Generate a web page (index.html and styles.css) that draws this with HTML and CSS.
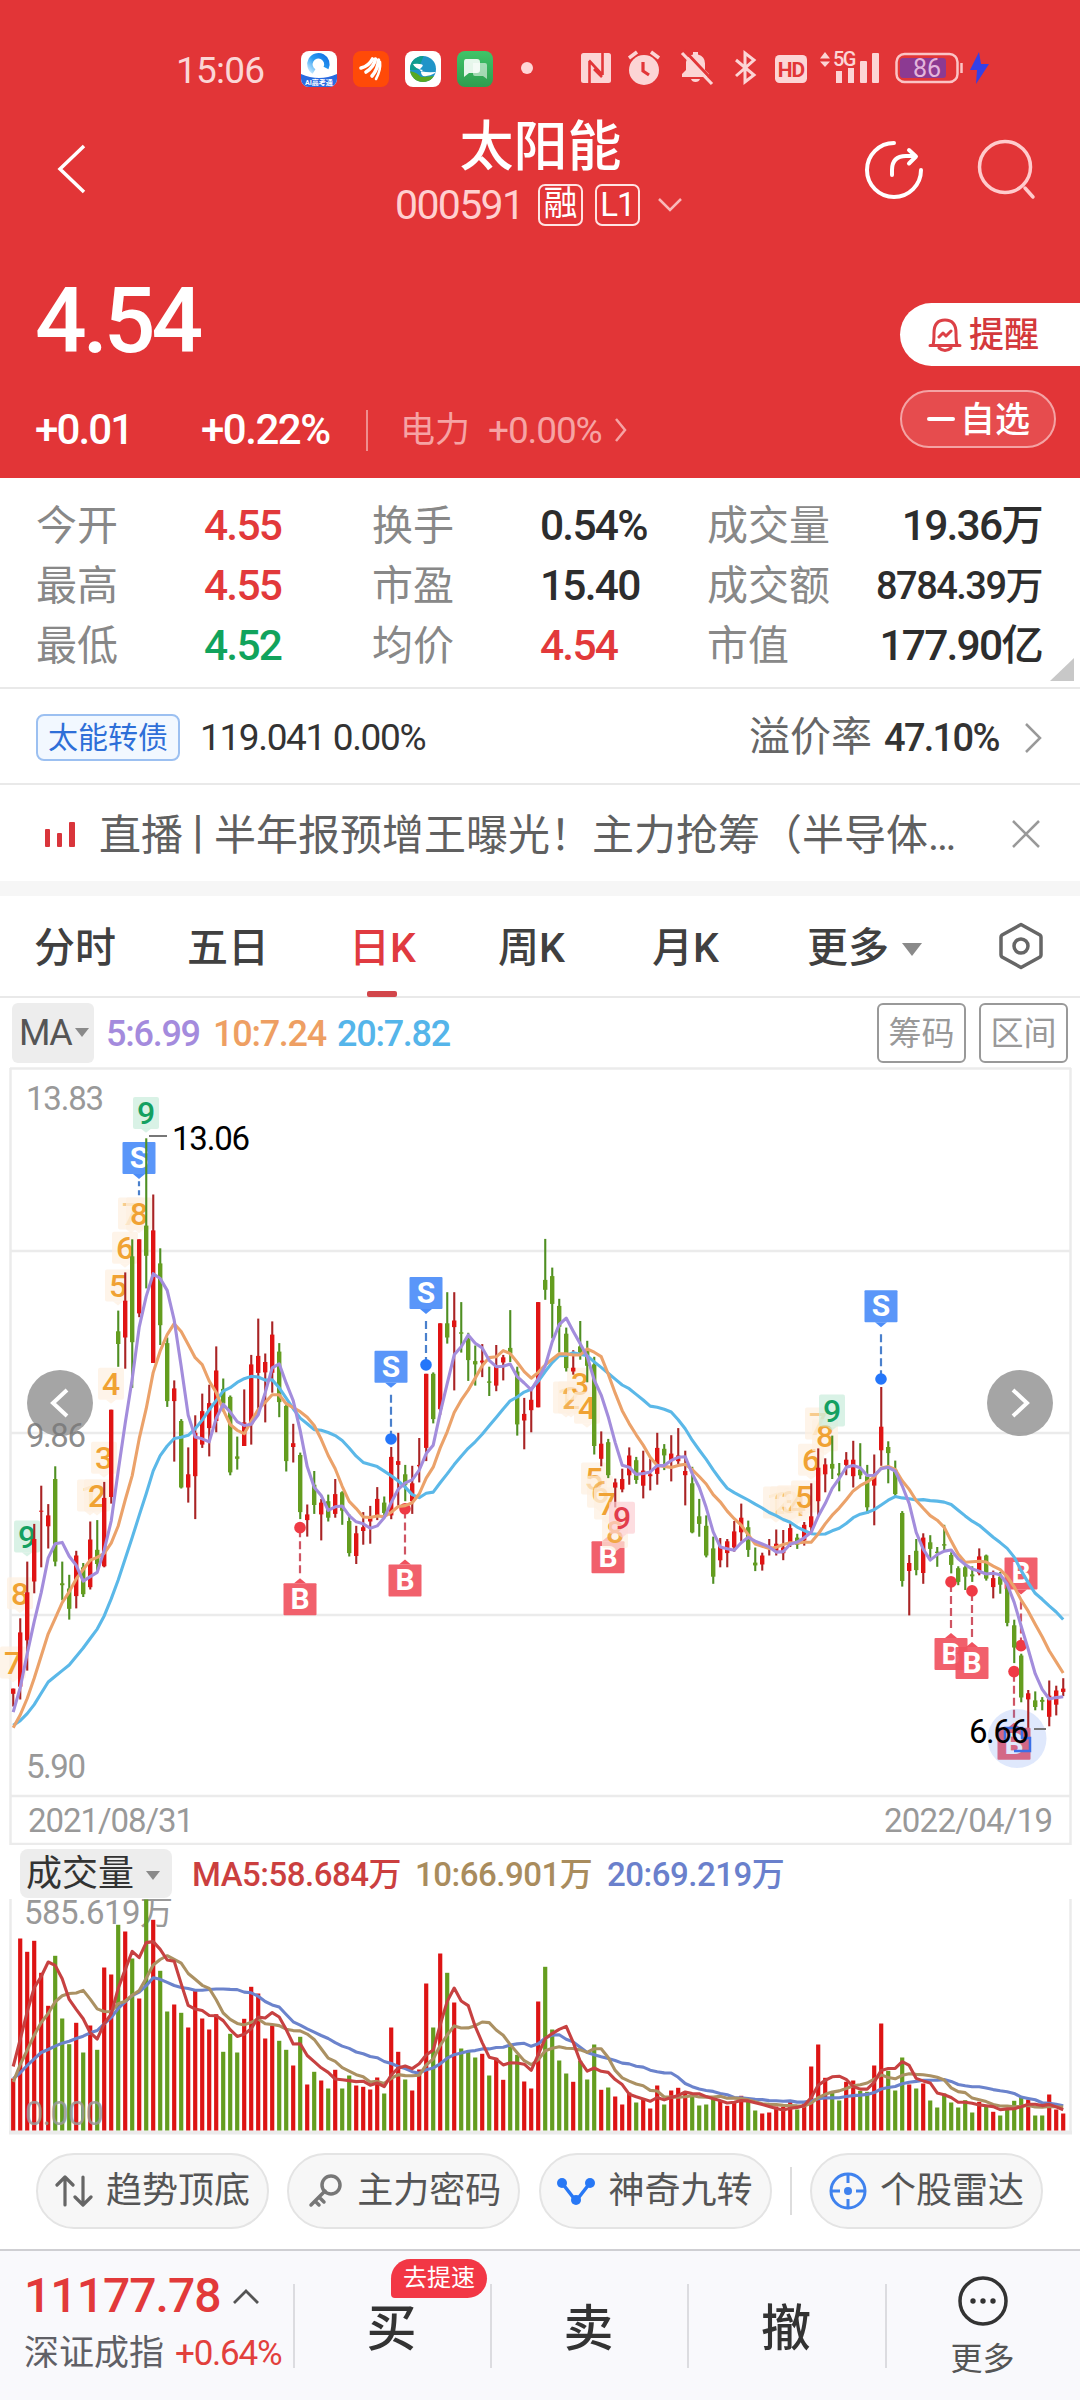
FILE: index.html
```html
<!DOCTYPE html>
<html lang="zh-CN">
<head>
<meta charset="utf-8">
<title>太阳能 000591</title>
<link rel="stylesheet" href="styles.css">
</head>
<body>
<header class="hero">
  <div class="status">
    <span class="clock">15:06</span>
    <svg class="apps" width="240" height="36" viewBox="0 0 240 36">
      <defs>
        <linearGradient id="gq" x1="0" y1="1" x2="1" y2="0"><stop offset="0" stop-color="#bfe6ff"/><stop offset=".5" stop-color="#2b9cf0"/><stop offset="1" stop-color="#1473e6"/></linearGradient>
        <linearGradient id="gm" x1="0" y1="0" x2="0" y2="1"><stop offset="0" stop-color="#3fc468"/><stop offset="1" stop-color="#2e9d4f"/></linearGradient>
        <clipPath id="ca"><rect width="36" height="36" rx="8"/></clipPath>
        <clipPath id="cg"><circle cx="122" cy="18" r="13"/></clipPath>
      </defs>
      <g clip-path="url(#ca)"><rect width="36" height="36" fill="#fff"/><path d="M0 23q18 8 36 0v13H0z" fill="#2a6be0"/></g>
      <path d="M13 20.500A8.500 8.500 0 1 1 25 17" fill="none" stroke="url(#gq)" stroke-width="5.500"/>
      <text x="18" y="33.500" class="app-text">AI高考通</text>
      <rect x="52" width="36" height="36" rx="8" fill="#ff4a08"/>
      <g fill="none" stroke="#fff" stroke-linecap="round" stroke-width="3.600"><path d="M60 17q8-2 11.500-9"/><path d="M65 21q8-5 9.500-13"/><path d="M71 25q6-7 6.500-16"/><path d="M75 28q5-9 4-17" stroke-width="2.600"/></g>
      <rect x="104" width="36" height="36" rx="8" fill="#fff"/>
      <g clip-path="url(#cg)"><path d="M109 4h27v28h-27z" fill="#2094c8"/><path d="M109 4h14l-6 15h-10z" fill="#0f9c8e"/><path d="M108 20q8 1 12 6l16-1v8h-28z" fill="#58a822"/><path d="M112 13q14-1 8 4t16 4q-8 5-14 4-4-4 0-6-8-1-10-6z" fill="#fff"/></g>
      <rect x="156" width="36" height="36" rx="8" fill="url(#gm)"/>
      <path d="M172 12h12q2 0 2 2v14l-4-3h-8q-2 0-2-2z" fill="#fff" opacity=".55"/>
      <path d="M165 8h11q3 0 3 3v8q0 3-3 3h-8l-5 4V11q0-3 2-3z" fill="#fff" opacity=".88"/>
      <circle cx="226" cy="17" r="6" fill="#ffd6d6"/>
    </svg>
    <svg class="sys" width="410" height="40" viewBox="0 0 410 40">
      <g fill="#fcd5d5">
        <rect x="0" y="4" width="30" height="30" rx="2.500"/>
        <path d="M8.500 34V12M8 11.500l13 14M21.500 4v22M13 20l8 8" fill="none" stroke="#e23537" stroke-width="2.600"/>
        <circle cx="63" cy="21" r="15"/>
        <path d="M48 9l8-6M70 3l8 6" stroke="#fcd5d5" stroke-width="3.500"/>
        <path d="M62 13v9l6 4" fill="none" stroke="#e23537" stroke-width="3.200"/>
        <path d="M101 28v-3l4-4v-8q1-6 7-7.500V3h5v2.500q7 2 7 9V21l4 4v3zM110 30h9q-1 3-4.500 3t-4.500-3z"/>
        <path d="M103 1l31 33" stroke="#e23537" stroke-width="3"/><path d="M101 4l30 31" stroke="#fcd5d5" stroke-width="3.200"/>
        <path d="M155 11l18 15-9 7V4l9 7-18 16" fill="none" stroke="#fcd5d5" stroke-width="3"/>
        <rect x="194" y="6" width="32" height="28" rx="4.500"/>
        <path d="M239 9.500l5-6.500 5 6.500zM239 12.500l5 5.500 5-5.500z"/>
        <rect x="255" y="22" width="6" height="12"/><rect x="267" y="19" width="6" height="15"/><rect x="279" y="12" width="7" height="22" rx="1"/><rect x="291" y="4" width="7" height="30" rx="1"/>
      </g>
      <text x="210" y="28" class="hd">HD</text>
      <text x="252" y="17" class="g5">5G</text>
      <rect x="315.500" y="5" width="61" height="28" rx="8" fill="none" stroke="#fbc4c5" stroke-width="2.500"/>
      <rect x="319" y="9" width="46" height="20" rx="3" fill="#8c3a92"/>
      <path d="M380.500 14v10" stroke="#fbc4c5" stroke-width="2.500"/>
      <text x="346" y="28" class="bat">86</text>
      <path d="M398 3l-9 18h7l-1 14 13-20h-8z" fill="#3340e8"/>
    </svg>
  </div>
  <div class="nav">
    <svg class="back" width="30" height="50" viewBox="0 0 30 50"><path d="M27 2L3 25l24 23" fill="none" stroke="#fff" stroke-width="3.500"/></svg>
    <div class="name">
      <h1>太阳能</h1>
      <div class="code"><span class="num">000591</span><b>融</b><b>L1</b><svg width="24" height="14" viewBox="0 0 24 14"><path d="M1 1l11 11L23 1" fill="none" stroke="#f9b9ba" stroke-width="2.500"/></svg></div>
    </div>
    <svg class="tools" width="180" height="64" viewBox="0 0 180 64">
      <g fill="none" stroke-linecap="round" stroke-linejoin="round"><path d="M31 5A27 27 0 1 0 58 32" stroke="#fff" stroke-width="4"/><path d="M29 37v-5q0-14 14-14h9M46 12l7 6.500-7 7" stroke="#fff" stroke-width="4"/><circle cx="142" cy="29" r="25.500" stroke="#ffcbcc" stroke-width="3.500"/><path d="M162 50l8 9" stroke="#ffcbcc" stroke-width="3.500"/></g>
    </svg>
  </div>
  <div class="quote">
    <div class="price">
      <div class="last num">4.54</div>
      <div class="change"><span class="num diff">+0.01</span><span class="num pct">+0.22%</span><i></i><span class="sector">电力</span><span class="num sector-pct">+0.00%</span><svg width="12" height="24" viewBox="0 0 12 24"><path d="M1 1l9 11-9 11" fill="none" stroke="#f6a3a4" stroke-width="2.500"/></svg></div>
    </div>
    <div class="actions">
      <div class="remind"><svg width="34" height="36" viewBox="0 0 34 36"><g fill="none" stroke="#dc4046" stroke-width="3" stroke-linejoin="round" stroke-linecap="round"><path d="M2 28.500h30M5 28q1-3 1-12Q6 3 17 3t11 13q0 9 1 12M11 31q6 5 12 0M11 20l4-4 3 3 5-5"/></g></svg><span>提醒</span></div>
      <div class="watch"><i></i><span>自选</span></div>
    </div>
  </div>
</header>
<main>
  <section class="stats">
    <span>今开</span><b class="up">4.55</b><span>换手</span><b>0.54%</b><span>成交量</span><b class="end">19.36万</b>
    <span>最高</span><b class="up">4.55</b><span>市盈</span><b>15.40</b><span>成交额</span><b class="end small">8784.39万</b>
    <span>最低</span><b class="down">4.52</b><span>均价</span><b class="up">4.54</b><span>市值</span><b class="end">177.90亿</b>
    <i class="corner"></i>
  </section>
  <section class="bond">
    <span class="chip">太能转债</span><span class="num bond-price">119.041 0.00%</span><span class="premium">溢价率</span><span class="num rate">47.10%</span>
    <svg width="18" height="32" viewBox="0 0 18 32"><path d="M2 2l14 14L2 30" fill="none" stroke="#999" stroke-width="2.500"/></svg>
  </section>
  <section class="live">
    <svg width="32" height="28" viewBox="0 0 32 28"><g fill="#d9353b"><rect x="1" y="9" width="5" height="18" rx="1"/><rect x="13" y="13" width="5" height="14" rx="1"/><rect x="25" y="2" width="6" height="25" rx="1"/></g></svg>
    <span>直播<i>丨</i>半年报预增王曝光！主力抢筹（半导体…</span>
    <svg width="28" height="28" viewBox="0 0 28 28"><path d="M1 1l26 26M27 1L1 27" stroke="#999" stroke-width="2.500"/></svg>
  </section>
  <nav class="tabs">
    <span>分时</span><span>五日</span><span class="on">日K</span><span>周K</span><span>月K</span><span class="more">更多<i class="tri"></i></span>
    <svg width="44" height="48" viewBox="0 0 44 48"><g fill="none" stroke="#666" stroke-width="3.500" stroke-linejoin="round"><path d="M22 2.500L41 13q1 1 1 2v18q0 1-1 2L22 45.500 3 35q-1-1-1-2V15q0-1 1-2z"/><circle cx="22" cy="24" r="7"/></g></svg>
  </nav>
  <section class="ma">
    <span class="pick">MA<i class="tri"></i></span><span class="num m5">5:6.99</span><span class="num m10">10:7.24</span><span class="num m20">20:7.82</span>
    <span class="btn">筹码</span><span class="btn">区间</span>
  </section>
  <svg class="kline" width="1080" height="778" viewBox="0 0 1080 778">
    <g class="rule"><path d="M10 1.500h1061M10 184h1061M10 366h1061M10 548h1061M10 729h1061M10 777h1061M10.500 1v777M1070.500 1v777"/></g>
    <g id="signals"></g>
    <g id="candles"></g>
    <g id="averages"></g>
    <g id="nine"></g>
    <path d="M149 69h18M1034 662h12" stroke="#777" stroke-width="2"/>
    <text x="172" y="83" class="t black" textLength="78">13.06</text>
    <text x="969" y="676" class="t black" textLength="60">6.66</text>
    <g class="arrow"><circle cx="60" cy="336" r="33"/><path d="M67 323l-14 13 14 13"/><circle cx="1020" cy="336" r="33"/><path d="M1013 323l14 13-14 13"/></g>
    <text x="26" y="43" class="t" textLength="78">13.83</text>
    <text x="26" y="380" class="t mid" textLength="60">9.86</text>
    <text x="26" y="711" class="t" textLength="60">5.90</text>
    <text x="28" y="765" class="t" textLength="166">2021/08/31</text>
    <text x="884" y="765" class="t" textLength="169">2022/04/19</text>
  </svg>
  <section class="vol">
    <span class="pick2">成交量<i class="tri"></i></span><span class="num v5">MA5:58.684万</span><span class="num v10">10:66.901万</span><span class="num v20">20:69.219万</span>
  </section>
  <svg class="volume" width="1080" height="236" viewBox="0 0 1080 236">
    <g class="rule"><path d="M10.500 0v234M1070.500 0v234"/><path d="M9 233.500h1063" stroke-width="4"/></g>
    <text x="24" y="25" class="t" textLength="149">585.619万</text>
    <g id="bars"></g>
    <text x="25" y="226" class="t zero" textLength="79">0.000</text>
    <g id="volAverages"></g>
  </svg>
  <section class="pills">
    <span class="pill"><svg width="38" height="36" viewBox="0 0 38 36"><g fill="none" stroke="#666" stroke-width="3.200" stroke-linecap="round" stroke-linejoin="round"><path d="M10 32V5M2 12l8-8 8 8"/><path d="M28 4v27M20 24l8 8 8-8"/></g></svg>趋势顶底</span>
    <span class="pill"><svg width="38" height="36" viewBox="0 0 38 36"><g fill="none" stroke="#777" stroke-width="3.500" stroke-linecap="round"><circle cx="25" cy="12" r="9"/><path d="M19 18L5 32M13 24l5 5M9 28l4 4"/></g></svg>主力密码</span>
    <span class="pill"><svg width="38" height="36" viewBox="0 0 38 36"><path d="M5 10l14 18L33 10" fill="none" stroke="#2878f5" stroke-width="3.500"/><g fill="#2878f5"><circle cx="5" cy="10" r="5"/><circle cx="33" cy="10" r="5"/><circle cx="19" cy="27" r="5"/></g></svg>神奇九转</span>
    <i></i>
    <span class="pill"><svg width="38" height="38" viewBox="0 0 38 38"><g fill="none" stroke="#3f82ee" stroke-width="3"><circle cx="19" cy="19" r="17"/><path d="M19 3v8M19 27v8M3 19h8M27 19h8"/></g><circle cx="19" cy="19" r="4" fill="#3f82ee"/></svg>个股雷达</span>
  </section>
</main>
<footer class="dock">
  <div class="index">
    <div class="idx-val"><span class="num">11177.78</span><svg width="26" height="15" viewBox="0 0 26 15"><path d="M1 14L13 2l12 12" fill="none" stroke="#555" stroke-width="2.800"/></svg></div>
    <div class="idx-name"><span>深证成指</span><span class="num">+0.64%</span></div>
  </div>
  <div class="trade">买<em>去提速</em></div>
  <div class="trade">卖</div>
  <div class="trade">撤</div>
  <div class="etc"><svg width="52" height="52" viewBox="0 0 52 52"><circle cx="26" cy="26" r="23" fill="none" stroke="#333" stroke-width="3.500"/><g fill="#333"><circle cx="16" cy="26" r="2.700"/><circle cx="26" cy="26" r="2.700"/><circle cx="36" cy="26" r="2.700"/></g></svg><span>更多</span></div>
</footer>
<script src="chart.js"></script>
</body>
</html>
```
FILE: styles.css
```css
* { box-sizing: border-box; }
body { margin: 0; width: 1080px; height: 2400px; overflow: hidden; background: #fff; color: #333; font-family: Roboto, "Noto Sans CJK SC", sans-serif; font-size: 41px; line-height: 1; white-space: nowrap; }
i, em, b, h1 { font-style: normal; font-weight: normal; }
svg { display: block; flex: none; }
.num { letter-spacing: -.045em; white-space: pre; }
.tri { display: inline-block; border: solid transparent; border-width: 9px 7px 0; border-top-color: #8a8a8a; }

.hero { height: 478px; background: #e23537; color: #fff; }
.status { height: 100px; padding: 37px 0 0 176px; display: flex; align-items: center; color: #fbd6d6; }
.clock { width: 125px; padding-top: 3px; font-size: 37px; font-weight: 400; letter-spacing: -.8px; }
.apps { margin-top: 1px; }
.sys { margin-left: 40px; }
.app-text { font-size: 7px; font-weight: 700; fill: #fff; text-anchor: middle; }
.hd { font-size: 21px; font-weight: 700; fill: #e23537; text-anchor: middle; letter-spacing: -1px; }
.g5 { font-size: 20px; font-weight: 500; fill: #fcd5d5; letter-spacing: -1.500px; }
.bat { font-size: 25px; fill: #e3b5dc; text-anchor: middle; }

.nav { height: 140px; display: grid; grid-template-columns: 57px 202px 563px 1fr; }
.back { grid-column: 2; margin-top: 44px; }
.name { display: flex; flex-direction: column; align-items: center; margin-left: -202px; width: 563px; grid-column: 3; margin-left: 0; }
.name h1 { margin: 20px 0 0; font-size: 54px; line-height: 56px; font-weight: 500; }
.code { height: 44px; margin: 7px 0 0 -4px; display: flex; align-items: center; font-size: 41px; color: #ffd0d0; }
.code .num { width: 131px; letter-spacing: -.04em; }
.code b { width: 45px; height: 42px; margin: 0 12px 0 12px; border: 2.500px solid #ffe4e4; border-radius: 7px; font-size: 34px; line-height: 35px; text-align: center; color: #fff; }
.code b + b { margin-left: 0; font-size: 33px; letter-spacing: -1px; line-height: 38px; }
.code svg { margin-left: 6px; }
.tools { margin: 38px 0 0 41px; }

.quote { height: 238px; display: flex; justify-content: space-between; }
.price { padding: 38px 0 0 35px; }
.last { font-size: 91px; line-height: 86px; font-weight: 500; }
.change { height: 46px; margin-top: 43px; display: flex; align-items: center; }
.diff { width: 166px; font-size: 42px; font-weight: 500; }
.pct { width: 165px; font-size: 42px; font-weight: 500; letter-spacing: -.035em; }
.change i { width: 2px; height: 41px; background: #ef8e8f; margin-right: 32px; }
.sector { width: 88px; font-size: 35px; color: #f6a3a4; }
.sector-pct { width: 127px; font-size: 37px; letter-spacing: -.03em; color: #f6a3a4; }
.actions { width: 180px; padding-top: 63px; font-size: 35px; }
.remind { height: 63px; padding-left: 28px; display: flex; align-items: center; gap: 7px; border-radius: 32px 0 0 32px; background: #fff; color: #d4393c; font-weight: 500; }
.remind span { line-height: 50px; padding-top: 3px; }
.watch { width: 156px; height: 58px; margin-top: 24px; padding-left: 25px; display: flex; align-items: center; gap: 5px; border: 2px solid #f4a3a4; border-radius: 29px; background: #e64c4e; font-weight: 500; }
.watch i { width: 28px; height: 3.500px; background: #fff; border-radius: 2px; }
.watch span { padding-top: 2px; }

.stats { position: relative; height: 211px; padding: 18px 38px 0 36px; display: grid; grid-template-columns: 168px 168px 168px 167px 130px 1fr; grid-auto-rows: 60px; align-items: center; border-bottom: 2px solid #e9e9e9; color: #888; }
.stats b { font-size: 42.500px; font-weight: 500; letter-spacing: -.042em; color: #2d2d2d; }
.stats .up { color: #e2393a; }
.stats .down { color: #11a35c; }
.stats .end { text-align: right; }
.stats .small { font-size: 38px; letter-spacing: -.04em; }
.corner { position: absolute; right: 6px; bottom: 6px; border: solid transparent; border-width: 0 0 23px 24px; border-bottom-color: #c8c8c8; }
.bond { height: 96px; padding: 3px 38px 0 36px; display: flex; align-items: center; border-bottom: 2px solid #e9e9e9; }
.chip { width: 144px; height: 47px; border: 2px solid #9cc0f1; border-radius: 8px; background: #f2f8ff; color: #2e6fd8; font-size: 30px; line-height: 44px; text-align: center; }
.bond-price { margin-left: 20px; font-size: 37px; letter-spacing: -.037em; }
.premium { margin-left: auto; color: #666; }
.rate { width: 137px; margin-left: 12px; font-size: 38px; font-weight: 500; }
.bond svg { margin-left: 3px; }
.live { height: 96px; padding: 2px 40px 0 44px; display: flex; align-items: center; color: #606060; }
.live span { flex: 1; margin: 3px 0 0 23px; font-size: 42px; }
.live i { margin: 0 -5px 0 -6px; }
.tabs { height: 117px; padding: 0 36px 0 34px; display: grid; grid-template-columns: 153px 162px 149px 154px 155px 192px 44px; align-items: center; border-top: 15px solid #f6f6f6; border-bottom: 2px solid #e9e9e9; font-size: 41px; color: #404040; }
.tabs span { position: relative; top: 2px; font-weight: 500; }
.tabs .on { color: #e03a40; }
.tabs .on::after { content: ""; position: absolute; left: 18px; top: 63px; width: 30px; height: 6px; border-radius: 2px; background: #d2464b; }
.tabs .tri { margin-left: 13px; border-width: 13px 10px 0; vertical-align: 6px; }
.ma { height: 69px; padding: 4px 12px 3px 12px; display: flex; align-items: center; font-size: 36px; }
.pick { width: 82px; height: 60px; padding-left: 7px; border-radius: 6px; background: #ededed; color: #555; line-height: 61px; letter-spacing: -.045em; }
.pick .tri { margin-left: 4px; vertical-align: 8px; }
.ma .num { padding-top: 2px; font-weight: 500; letter-spacing: -.035em; }
.m5 { width: 107px; margin-left: 12px; color: #a48bdd; }
.m10 { width: 124px; color: #ee9f63; }
.m20 { color: #55b5ea; }
.btn { width: 89px; height: 60px; margin-left: 13px; border: 2px solid #999; border-radius: 6px; color: #999; font-size: 33px; line-height: 58px; text-align: center; }
.m20 + .btn { margin-left: auto; }

.rule { fill: none; stroke: #ebebeb; stroke-width: 2.500; }
.t { font-size: 33px; fill: #999; }
.black { fill: #000; }
.mid { fill: #777; fill-opacity: .85; }
.zero { fill-opacity: .85; }
.arrow circle { fill: #999; fill-opacity: .88; }
.arrow path { fill: none; stroke: #fff; stroke-width: 4; }
.flag { font-size: 30px; font-weight: 700; fill: #fff; text-anchor: middle; }
.step { font-size: 32px; font-weight: 500; text-anchor: middle; }
.vol { height: 55px; margin-top: -1px; padding: 5px 0 1px 20px; display: flex; align-items: center; font-size: 33px; }
.vol .num { padding-top: 2px; letter-spacing: -.015em; font-weight: 500; }
.pick2 { width: 152px; height: 49px; padding-left: 6px; border-radius: 8px; background: #ededed; font-size: 36px; line-height: 51px; color: #333; }
.pick2 .tri { margin-left: 12px; vertical-align: 6px; }
.v5 { width: 223px; margin-left: 20px; color: #cb3f3f; }
.v10 { width: 192px; color: #a98c5d; }
.v20 { color: #6a80cc; }

.pills { height: 114px; padding: 18px 37px 20px 36px; display: flex; justify-content: space-between; align-items: center; color: #555; font-size: 36px; }
.pill { width: 233px; height: 76px; display: flex; align-items: center; justify-content: center; gap: 13px; border: 2px solid #e4e4e4; border-radius: 38px; background: #f7f7f7; }
.pills > i { width: 2px; height: 48px; background: #ddd; }

.dock { height: 152px; display: grid; grid-template-columns: 293px 197px 197px 198px 1fr; border-top: 2px solid #cfcfd3; background: #f9f9fc; }
.index { padding: 20px 0 0 24px; }
.idx-val { display: flex; align-items: center; gap: 12px; font-size: 48px; font-weight: 500; line-height: 50px; color: #e2393a; }
.idx-val .num { letter-spacing: -.02em; }
.idx-name { margin-top: 11px; display: flex; align-items: center; gap: 11px; font-size: 35px; line-height: 44px; color: #606066; }
.idx-name .num { color: #e2403c; letter-spacing: -.035em; }
.trade, .etc { position: relative; display: flex; justify-content: center; align-items: center; }
.trade { padding-top: 6px; font-size: 50px; font-weight: 500; }
.trade::before, .etc::before { content: ""; position: absolute; left: 0; top: 33px; width: 2px; height: 84px; background: #dcdce0; }
.trade em { position: absolute; left: 98px; top: 8px; width: 96px; height: 39px; border-radius: 20px 20px 20px 4px; background: #f23745; color: #fff; font-size: 24px; font-weight: 400; line-height: 38px; text-align: center; }
.etc { flex-direction: column; justify-content: flex-start; padding-top: 24px; gap: 12px; font-size: 32px; color: #555; }
.etc span { line-height: 40px; }
```
FILE: chart.js
```js
// Each day: "kind high bodyTop bodyBottom low"; r = rise, g = fall. Values are plot ticks measured downwards.
const days = `r 1332 1332 1343 1370|r 1183 1213 1328 1355|r 1063 1128 1230 1294|r 983 1015 1105 1130|r 902 955 957 1075|r 941 965 988 1035|g 861 888 1063 1073|g 1063 1109 1113 1145|g 1091 1120 1163 1186|r 1040 1050 1136 1162|g 1066 1075 1132 1138|r 978 1016 1117 1122|g 975 1038 1068 1082|r 894 928 1073 1075|r 741 741 926 940|g 531 575 602 650|r 450 510 588 654|g 380 416 598 695|r 380 380 537 545|g 166 351 415 484|r 285 361 642 642|g 399 431 562 604|g 588 600 723 735|r 679 696 723 851|g 761 765 906 908|r 821 878 906 938|r 753 790 882 973|r 707 744 815 822|r 688 727 780 840|r 607 658 765 789|g 675 697 728 745|g 711 714 874 880|g 798 840 845 868|r 698 768 818 818|r 625 645 772 815|r 548 627 663 752|r 622 640 662 768|r 554 582 663 705|g 600 618 725 757|g 725 733 850 872|r 771 812 820 853|g 832 837 958 973|r 942 963 975 1010|g 871 900 943 962|r 930 938 963 1018|g 921 935 970 978|r 888 920 962 970|g 914 916 955 985|g 962 977 1045 1052|r 987 1003 1051 1068|r 958 990 998 1027|r 945 968 978 1025|r 905 930 968 975|g 925 938 960 965|r 820 841 965 973|r 790 850 858 945|g 858 878 900 935|r 860 897 935 962|r 801 858 861 895|r 665 665 822 850|g 662 665 761 770|r 558 558 740 752|g 492 558 588 601|r 492 552 566 700|g 513 577 580 620|g 578 590 636 680|g 605 638 645 690|r 602 637 641 672|g 650 681 684 712|r 604 648 690 702|r 625 630 641 679|g 530 610 622 640|g 650 660 772 796|r 716 750 764 825|r 700 720 742 789|r 513 513 736 736|g 379 466 487 508|g 440 458 517 590|g 506 521 565 620|g 567 580 653 660|r 615 652 660 667|g 553 607 620 635|g 595 615 648 683|g 629 645 818 836|r 787 813 845 861|g 803 810 880 886|r 887 895 906 948|r 866 888 910 916|r 821 838 880 900|g 841 848 890 898|r 828 870 902 929|r 845 878 882 912|r 790 822 877 900|g 814 824 838 869|r 795 834 850 893|r 780 838 850 856|r 828 871 880 944|g 862 897 1001 1003|g 930 967 983 1010|g 965 987 1050 1054|g 1010 1035 1095 1110|r 1013 1030 1060 1075|r 1015 1020 1045 1075|r 977 999 1033 1042|r 940 970 1001 1020|g 976 990 1038 1053|g 1033 1065 1071 1083|r 1044 1050 1069 1082|r 1015 1030 1034 1050|r 995 1025 1040 1050|r 996 1033 1045 1060|r 982 992 1022 1032|g 1004 1012 1027 1036|r 979 985 1018 1029|r 897 967 990 1005|r 823 864 935 967|r 844 857 878 916|g 796 856 866 888|g 854 876 880 914|r 831 847 858 880|r 807 847 882 906|g 812 868 880 888|g 858 882 948 962|r 836 878 902 986|r 693 777 827 860|g 808 820 833 897|g 849 868 920 927|g 956 960 1104 1116|r 1049 1066 1083 1177|g 1015 1040 1081 1092|r 1003 1012 1087 1110|g 1007 1022 1036 1058|g 1032 1042 1045 1074|g 985 1026 1029 1040|g 1043 1049 1070 1088|g 1073 1077 1106 1113|g 1068 1075 1095 1123|g 1073 1090 1094 1106|r 1035 1052 1088 1092|g 1048 1050 1099 1103|r 1082 1098 1117 1141|g 1085 1095 1112 1131|g 1110 1120 1193 1200|g 1186 1198 1245 1278|g 1258 1262 1351 1361|r 1335 1342 1355 1415|g 1338 1357 1371 1378|g 1350 1356 1360 1378|r 1315 1347 1392 1412|r 1326 1336 1366 1389|r 1310 1332 1339 1348`.split("|").map(s => { const a = s.split(" "); return { k: a[0], v: a.slice(1).map(Number) }; });

// Top of each volume bar, in ticks; 1021 is the base line.
const tops = [865,445,485,452,548,647,497,685,762,698,787,706,779,532,553,404,424,505,625,328,389,542,664,643,668,712,597,685,718,672,785,731,787,686,590,610,745,706,752,779,826,740,883,845,871,895,839,895,856,886,890,898,862,910,712,785,868,901,838,580,712,490,548,637,775,782,802,791,856,803,869,770,794,874,895,634,530,718,811,850,875,812,868,763,899,892,919,943,907,937,925,955,886,943,901,893,905,910,946,943,925,932,947,935,917,930,961,970,967,949,950,935,958,940,829,763,863,905,931,875,871,902,905,826,700,842,901,802,883,895,880,931,952,910,937,952,930,967,935,950,965,976,955,932,920,928,976,976,913,958,970];

const X = i => 13.2 + 7 * i;
const Y = t => t * 0.4719 - 7;
const V = t => (t - 328) / 3 + 0.5;
const put = (id, html) => { document.getElementById(id).innerHTML = html; };
const rect = (x, y, w, h, c, extra = "") => `<rect x="${x.toFixed(1)}" y="${y.toFixed(1)}" width="${w}" height="${Math.max(h, 1).toFixed(1)}" fill="${c}" ${extra}/>`;

// Moving average; the seed holds the days for which the window reaches before the first candle.
function average(list, n, seed) {
  return list.map((_, i) => i < seed.length ? seed[i] : list.slice(i - n + 1, i + 1).reduce((a, b) => a + b) / n);
}
const line = (list, f, c) => `<polyline points="${list.map((v, i) => X(i).toFixed(1) + "," + f(v).toFixed(1)).join(" ")}" fill="none" stroke="${c}" stroke-width="3.1" stroke-linejoin="round"/>`;

put("candles", days.map(({ k, v }, i) => {
  const up = k === "r", x = X(i);
  return rect(x - 1, Y(v[0]), 2.1, Y(v[3]) - Y(v[0]), up ? "#a92425" : "#4f8f22") +
    rect(x - 2.2, Y(v[1]), 4.4, Y(v[2]) - Y(v[1]), up ? "#e01414" : "#649d1f");
}).join(""));

const closes = days.map(d => d.k === "r" ? d.v[1] : d.v[2]);
put("averages",
  line(average(closes, 20, [1410,1400,1385,1366,1342,1318,1306,1294,1282,1264,1246,1226,1206,1178,1142,1102,1057,1012,965]), Y, "#5bb8e8") +
  line(average(closes, 10, [1415,1388,1353,1310,1263,1216,1183,1150,1127]), Y, "#eba26a") +
  line(average(closes, 5, [1382,1330,1258,1190]), Y, "#a38ddc"));

put("bars", tops.map((t, i) => rect(X(i) - 2.1, V(t), 4.2, 231.5 - V(t), days[i].k === "r" ? "#dd1414" : "#649d1f")).join(""));
put("volAverages",
  line(average(tops, 20, [866,848,826,806,787,778,768,759,753,745,738,728,721,701,682,655,635,616,606]), V, "#6b83cc") +
  line(average(tops, 10, [875,823,780,735,697,670,635,617,610]), V, "#ab9163") +
  line(average(tops, 5, [829,748,665,593]), V, "#c74141"));

// Buy and sell flags: [letter, x, body top tick, dot tick, pointer side]
const flags = [["S",139,174,0,1],["S",391,616,803,1],["S",426,460,646,1],["S",881,488,676,1],
  ["B",300,1109,991,-1],["B",405,1069,951,-1],["B",608,1020,0,-1],["B",951,1225,1106,-1],["B",972,1244,1125,-1],["B",1021,1054,1241,1],["B",1014,1415,1296,-1]];
put("signals", flags.map(([l, x, top, dot, side]) => {
  const sell = l === "S", fill = sell ? "#4c8df8" : "#f0525f", y = Y(top), h = 32;
  const from = side > 0 ? y + h + 12 : y - 10;
  let s = dot ? `<path d="M${x} ${from}V${Y(dot)}" stroke="${sell ? "#4a80cc" : "#cf5563"}" stroke-width="2.200" stroke-dasharray="8 4"/><circle cx="${x}" cy="${Y(dot)}" r="5.800" fill="${sell ? "#2476fa" : "#ef3a45"}"/>` : "";
  const tip = side > 0 ? `M${x - 6} ${y + h}l6 5 6-5z` : `M${x - 6} ${y}l6-5 6 5z`;
  return s + rect(x - 16.5, y, 33, h, fill, 'rx="1" fill-opacity=".92"') + `<path d="${tip}" fill="${fill}"/><text class="flag" x="${x}" y="${y + 26}">${l}</text>`;
}).join("") + `<path d="M139 ${Y(257)}v14" stroke="#4a80cc" stroke-width="2.200" stroke-dasharray="5 4"/>
<circle cx="1017" cy="${Y(1438)}" r="29.500" fill="#5f8df0" fill-opacity=".2"/><path d="M1005 ${Y(1445)}v-14h17v10h8v13h-16" fill="none" stroke="#3b6fe6" stroke-width="2.500"/>`);

// Nine-turn counters: [digit, x, centre tick, strength]
const steps = [[7,13,1277,1],[8,20,1130,1],[9,27,1010,1],[1,90,923,.4],[2,97,923,1],[3,104,843,1],[4,111,686,1],[5,118,478,1],[6,125,398,1],[7,131,325,.5],[8,139,325,1],[9,146,112,1],
  [1,566,715,.5],[2,571,715,.8],[3,580,686,1],[4,587,737,1],[5,594,887,1],[6,600,915,.7],[7,607,940,1],[8,615,1000,.9],
  [1,776,938,.25],[2,783,938,.4],[3,790,935,.6],[4,797,942,.7],[5,804,925,1],[6,811,847,1],[7,818,770,.5],[8,825,795,1],[9,832,743,1]];
const badge = (d, x, t, o, color, bg) => {
  const y = Y(t);
  return rect(x - 13, y - 16, 26, 32, bg, 'rx="2" fill-opacity=".7"') + `<path d="M${x - 5} ${y + 16}l5 4 5-4z" fill="${bg}" fill-opacity=".7"/><text class="step" x="${x}" y="${y + 11.5}" fill="${color}" fill-opacity="${o}">${d}</text>`;
};
document.getElementById("signals").insertAdjacentHTML("beforeend", steps.map(([d, x, t, o]) =>
  d === 9 ? badge(d, x, t, o, "#14a061", "#c9ecdb") : badge(d, x, t, o, "#f0a233", "#fdefdf")).join(""));
put("nine", badge(9, 622, 970, 1, "#e23c4c", "#fccfd3"));
```
